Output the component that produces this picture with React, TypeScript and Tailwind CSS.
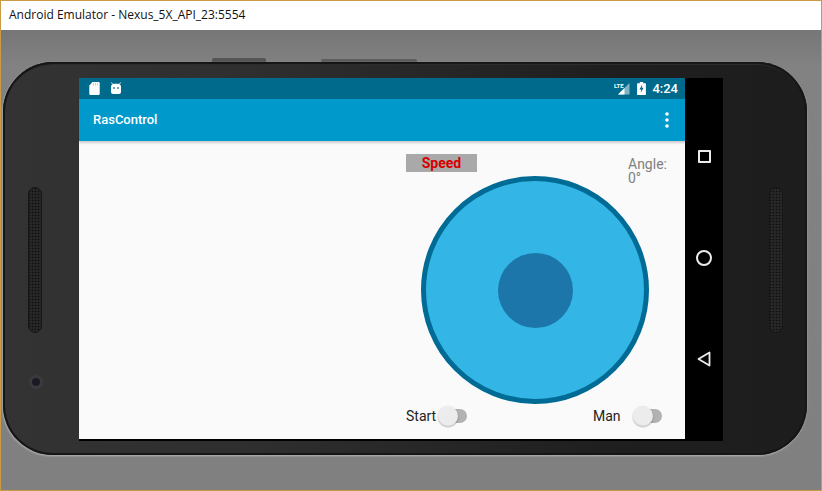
import React from "react";

function Toggle() {
  return (
    <div className="relative w-[28px] h-[14px] rounded-full bg-[#b2b2b2]">
      <div className="absolute left-[-1px] top-[-3px] w-[20px] h-[20px] rounded-full bg-[#ececec] shadow-[0_1px_2px_rgba(0,0,0,0.3)]" />
    </div>
  );
}

function Speaker() {
  return (
    <svg width="14" height="146" viewBox="0 0 14 146">
      <defs>
        <pattern id="dots" width="3" height="3" patternUnits="userSpaceOnUse">
          <rect width="3" height="3" fill="#272727" />
          <circle cx="1.5" cy="1.5" r="0.8" fill="#0c0c0c" />
        </pattern>
      </defs>
      <rect x="0.5" y="0.5" width="13" height="145" rx="6.5" fill="url(#dots)" stroke="#171717" />
    </svg>
  );
}

export default function App() {
  return (
    <div className="w-[822px] h-[491px] flex flex-col overflow-hidden border border-[#c99b45] font-['Roboto',sans-serif]">
      <div className="h-[29px] shrink-0 bg-white pl-[8px] flex items-center text-[12px] text-[#111] font-['Open_Sans',sans-serif] pb-[1px]">
        Android Emulator - Nexus_5X_API_23:5554
      </div>
      <div className="relative flex-1 bg-[#808080] pl-[2px] pt-[32px] bg-[linear-gradient(180deg,#767676_0%,#828282_8%,#808080_100%)]">
        <div className="absolute left-[211px] top-[28px] w-[54px] h-[4px] rounded-t-[2px] bg-[#555]" />
        <div className="absolute left-[320px] top-[29px] w-[96px] h-[3px] rounded-t-[2px] bg-[#5c5c5c]" />
        <div className="relative w-[804px] h-[393px] rounded-[50px] pl-[76px] pt-[16px] bg-[linear-gradient(90deg,#333333_0%,#2f2f2f_30%,#1f1f1f_75%,#1d1d1d_100%)] shadow-[inset_0_0_0_2px_#161616,inset_0_3px_0_#2c2c2c,0_1px_2px_#a8a8a8,-1px_1px_2px_#a0a0a0]">
          <div className="absolute left-[25px] top-[125px]"><Speaker /></div>
          <div className="absolute left-[766px] top-[125px]"><Speaker /></div>
          <div className="absolute left-[26px] top-[313px] w-[14px] h-[14px] rounded-full bg-[#3b3b3f] flex items-center justify-center">
            <div className="w-[8px] h-[8px] rounded-full bg-[#1a1a24]" />
          </div>
          <div className="flex w-[644px] h-[363px] bg-black">
            <div className="w-[606px] h-[361px] flex flex-col">
              <div className="h-[21px] shrink-0 bg-[#006a8c] flex items-center pl-[10px] pr-[7px] text-white">
                <svg width="11" height="13" viewBox="0 0 11 13" className="mr-[10px]">
                  <path d="M3.5 0H9.5a1.2 1.2 0 0 1 1.2 1.2V11.8a1.2 1.2 0 0 1-1.2 1.2H1.5a1.2 1.2 0 0 1-1.2-1.2V3.4Z" fill="#fff" />
                  <path d="M4.5 1v2.5M6.5 1v2.5M8.5 1v2.5" stroke="#9cc4d2" strokeWidth="0.7" />
                </svg>
                <svg width="12" height="13" viewBox="0 0 12 13">
                  <path d="M2 3.2a2 2 0 0 1 2-1.4h4a2 2 0 0 1 2 1.4H12V3.2 L11 3.2V10a2 2 0 0 1-2 2H3a2 2 0 0 1-2-2V3.2Z" fill="#fff" />
                  <path d="M2.5 2.5 1.6 .5M9.5 2.5l.9-2" stroke="#fff" strokeWidth="0.9" />
                  <circle cx="4" cy="6" r="1" fill="#3d8aa5" />
                  <circle cx="8" cy="6" r="1" fill="#3d8aa5" />
                </svg>
                <svg width="16" height="13" viewBox="0 0 16 13" className="ml-auto">
                  <path d="M15.5 1V12.5H4Z" fill="#7fb4c6" />
                  <path d="M10.5 6V12.5H4Z" fill="#fff" />
                  <text x="0" y="6" fontSize="6" fontWeight="700" fill="#fff" fontFamily="Roboto, sans-serif">LTE</text>
                </svg>
                <svg width="9" height="13" viewBox="0 0 9 13" className="ml-[7px]">
                  <path d="M2.8 0H6.2V1.2H8.3a.6.6 0 0 1 .6.6V12.4a.6.6 0 0 1-.6.6H.7a.6.6 0 0 1-.6-.6V1.8a.6.6 0 0 1 .6-.6H2.8Z" fill="#fff" />
                  <path d="M5.2 2.6 2.5 7.4H4.2L3.7 10.8 6.6 5.8H4.8Z" fill="#006a8c" />
                </svg>
                <span className="ml-[6px] text-[13px] font-medium leading-none">4:24</span>
              </div>
              <div className="h-[42px] shrink-0 bg-[#0099cc] flex items-center justify-between pl-[14px] pr-[16px] text-white shadow-[0_2px_2px_rgba(0,0,0,0.18)] z-10">
                <span className="text-[13px] font-medium">RasControl</span>
                <svg width="4" height="16" viewBox="0 0 4 16" fill="#fff">
                  <circle cx="2" cy="2" r="1.8" />
                  <circle cx="2" cy="8" r="1.8" />
                  <circle cx="2" cy="14" r="1.8" />
                </svg>
              </div>
              <div className="flex-1 bg-[#fafafa] pl-[327px] pt-[13px]">
                <div className="w-[256px]">
                  <div className="flex justify-between h-[18px]">
                    <div className="w-[71px] h-[18px] bg-[#a9a9a9] flex items-center justify-center text-[14px] font-bold text-[#d50000]">
                      Speed
                    </div>
                    <div className="w-[34px] mr-[0px] text-[14px] leading-[14px] pt-[3px] text-[#808080]">
                      Angle: 0°
                    </div>
                  </div>
                  <div className="ml-[15px] mt-[4px] w-[228px] h-[228px] rounded-full bg-[#33b5e5] border-[5px] border-[#006b94] flex items-center justify-center">
                    <div className="w-[75px] h-[75px] rounded-full bg-[#1c76aa]" />
                  </div>
                  <div className="mt-[5px] flex items-center h-[14px] text-[14px] text-[#222]">
                    <span className="w-[33px]">Start</span>
                    <Toggle />
                    <span className="ml-[126px] w-[41px]">Man</span>
                    <Toggle />
                  </div>
                </div>
              </div>
            </div>
            <div className="w-[38px] flex flex-col items-center pt-[72px]">
              <div className="w-[13px] h-[13px] border-2 border-[#ececec] rounded-[1px]" />
              <div className="w-[16px] h-[16px] mt-[87px] border-2 border-[#ececec] rounded-full" />
              <svg width="14" height="16" viewBox="0 0 14 16" className="mt-[85px]">
                <path d="M12.5 1.5V14.5L1.5 8Z" fill="none" stroke="#ececec" strokeWidth="1.8" strokeLinejoin="round" />
              </svg>
            </div>
          </div>
        </div>
      </div>
    </div>
  );
}
